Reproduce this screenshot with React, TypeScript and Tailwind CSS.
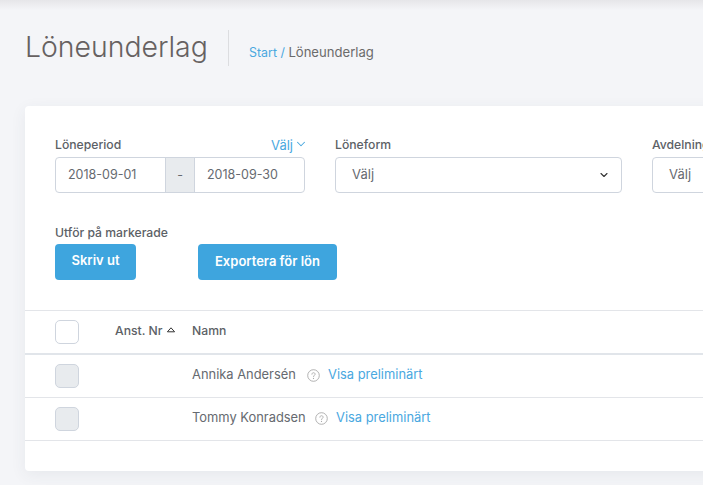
import { ChevronDown } from "lucide-react";

const rows = [
  { name: "Annika Andersén", nameWidth: "w-[105px]" },
  { name: "Tommy Konradsen", nameWidth: "w-[113px]" },
];

function HelpIcon() {
  return (
    <svg width="13" height="13" viewBox="0 0 13 13" fill="none" className="block shrink-0">
      <circle cx="6.5" cy="6.5" r="5.8" stroke="#a9a9a9" strokeWidth="0.9" />
      <path d="M4.9 5.2c0-.9.7-1.5 1.6-1.5s1.6.6 1.6 1.4c0 1.2-1.6 1.3-1.6 2.5" stroke="#a9a9a9" strokeWidth="0.9" strokeLinecap="round" />
      <circle cx="6.5" cy="9.4" r="0.6" fill="#a9a9a9" />
    </svg>
  );
}

function Field({ label, width, value }: { label: string; width: string; value: string }) {
  return (
    <div className={`${width} shrink-0`}>
      <div className="h-[22px] pt-[2px] text-[12.2px] font-medium leading-[16px] text-[#5c6166] whitespace-nowrap">{label}</div>
      <div className="flex h-[36px] items-center justify-between rounded-[4px] border border-[#cfd5de] bg-white pl-[16px] pr-[11px] text-[13px] text-[#666a70]">
        <span>{value}</span>
        <ChevronDown size={12} strokeWidth={2.2} className="text-[#333]" />
      </div>
    </div>
  );
}

export default function App() {
  return (
    <div className="h-[485px] w-[703px] overflow-hidden bg-[#f4f5f8] font-['Inter',sans-serif]">
      <div className="h-[10px] bg-gradient-to-b from-[#e6e6e9] to-[#f4f5f8]" />
      <div className="flex h-[96px] items-start pl-[25px] pt-[20px]">
        <h1 className="h-[36px] w-[203px] text-[28.4px] font-light leading-[33px] text-[#666161]">Löneunderlag</h1>
        <div className="h-[36px] w-px bg-[#dcdde0]" />
        <div className="pl-[20px] pt-[13px] text-[13.1px] leading-[18px] text-[#6b6b6b]">
          <span className="text-[12.4px] text-[#4aa8df]">Start / </span>Löneunderlag
        </div>
      </div>

      <div className="ml-[25px] h-[365px] w-[800px] rounded-[4px] bg-white shadow-[0_4px_16px_rgba(60,70,90,0.07)]">
        <div className="flex gap-[30px] pl-[30px] pt-[29px]">
          <div className="w-[250px] shrink-0">
            <div className="flex h-[22px] justify-between pt-[2px]">
              <span className="text-[12.2px] font-medium leading-[16px] text-[#5c6166]">Löneperiod</span>
              <span className="flex h-[16px] items-center gap-[1px] text-[13px] leading-[20px] text-[#4aa8df]">
                Välj <ChevronDown size={14} strokeWidth={1.8} className="-mr-[3px] -mt-[2px]" />
              </span>
            </div>
            <div className="flex h-[36px] rounded-[4px] border border-[#cfd5de] text-[12.5px] text-[#666a70]">
              <div className="flex w-[109px] items-center pl-[12px]">2018-09-01</div>
              <div className="flex w-[30px] items-center justify-center border-x border-[#cfd5de] bg-[#e8ebee]">-</div>
              <div className="flex items-center pl-[12px]">2018-09-30</div>
            </div>
          </div>
          <Field label="Löneform" width="w-[287px]" value="Välj" />
          <Field label="Avdelning" width="w-[200px]" value="Välj" />
        </div>

        <div className="pl-[30px] pt-[32px]">
          <div className="h-[19px] text-[12.2px] font-medium leading-[16px] text-[#5c6166]">Utför på markerade</div>
          <div className="flex gap-[62px]">
            <button className="h-[36px] w-[81px] rounded-[4px] bg-[#3ea5de] pb-[2px] text-[13px] font-semibold text-white">Skriv ut</button>
            <button className="h-[36px] w-[139px] rounded-[4px] bg-[#3ea5de] text-[13px] font-semibold text-white">Exportera för lön</button>
          </div>
        </div>

        <div className="mt-[30px] flex h-[43px] items-center border-t border-[#e3e5e9] pl-[30px] text-[12.2px] font-medium text-[#5c6166]">
          <div className="h-[24px] w-[24px] rounded-[5px] border border-[#cfd5de] bg-white" />
          <span className="ml-[36px] w-[77px] whitespace-nowrap pb-[2px]">
            Anst. Nr
            <svg width="10" height="6" viewBox="0 0 10 6" className="ml-[4px] inline-block align-[2px]" fill="none">
              <path d="M5 .8 8.6 4.8H1.4Z" stroke="#333" strokeWidth="1" strokeLinejoin="round" />
            </svg>
          </span>
          <span className="pb-[2px]">Namn</span>
        </div>
        <div className="h-[2px] bg-[#e1e5ea]" />
        {rows.map((row) => (
          <div key={row.name} className="flex h-[43px] items-center border-b border-[#e3e5e9] pl-[30px] text-[12.9px] text-[#666a70]">
            <div className="h-[24px] w-[24px] rounded-[5px] border border-[#cfd5de] bg-[#e8ebee]" />
            <span className={`ml-[113px] ${row.nameWidth} whitespace-nowrap pb-[3px]`}>{row.name}</span>
            <span className="ml-[10px] pb-[2px]"><HelpIcon /></span>
            <span className="ml-[8px] pb-[3px] text-[#4aa8df]">Visa preliminärt</span>
          </div>
        ))}
      </div>
    </div>
  );
}
